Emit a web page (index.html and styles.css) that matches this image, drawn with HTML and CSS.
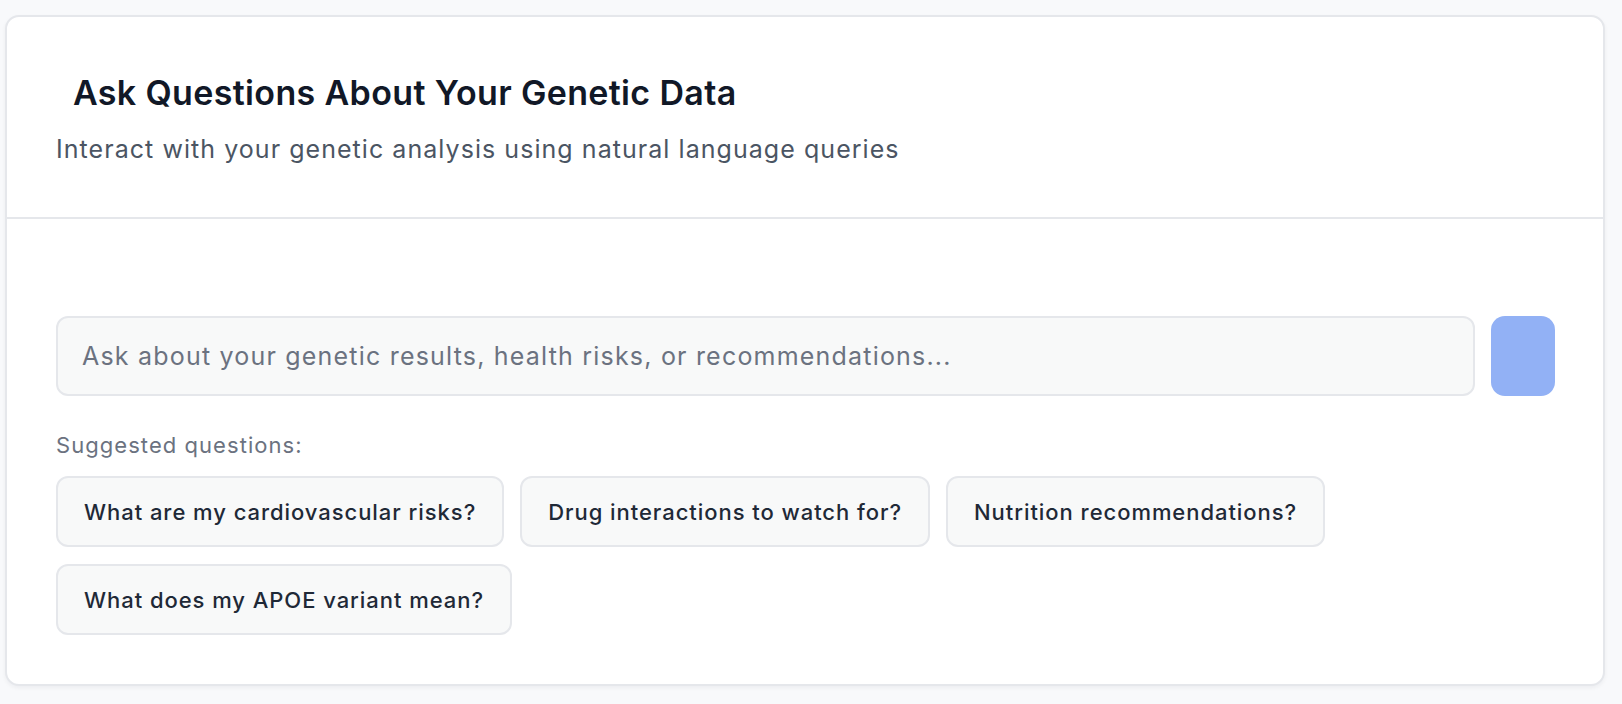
FILE: index.html
```html
<!DOCTYPE html>
<html lang="en">
<head>
<meta charset="utf-8">
<title>Ask Questions About Your Genetic Data</title>
<link rel="stylesheet" href="styles.css">
</head>
<body>
<div class="page">
  <section class="card">
    <header class="card-header">
      <h2 class="card-title"><span class="title-icon"></span>Ask Questions About Your Genetic Data</h2>
      <p class="card-desc">Interact with your genetic analysis using natural language queries</p>
    </header>
    <div class="card-body">
      <form class="ask-row">
        <input class="ask-input" type="text" placeholder="Ask about your genetic results, health risks, or recommendations...">
        <button class="ask-btn" type="button" disabled aria-label="Send"></button>
      </form>
      <p class="suggest-label">Suggested questions:</p>
      <div class="chips">
        <button class="chip" type="button">What are my cardiovascular risks?</button>
        <button class="chip" type="button">Drug interactions to watch for?</button>
        <button class="chip" type="button">Nutrition recommendations?</button>
        <button class="chip" type="button">What does my APOE variant mean?</button>
      </div>
    </div>
  </section>
</div>
</body>
</html>
```
FILE: styles.css
```css
* { box-sizing: border-box; }
html, body { margin: 0; padding: 0; }
body {
  background: #f8f9fb;
  font-family: Inter, "Noto Sans", "Liberation Sans", sans-serif;
  color: #111827;
}
.page {
  padding: 15px 17px 18px 5px;
}
.card {
  background: #ffffff;
  border: 2px solid #e5e7eb;
  border-radius: 14px;
  box-shadow: 0 2px 4px rgba(15, 23, 42, 0.05);
  height: 671px;
}
.card-header {
  padding: 56px 48px 0 49px;
  height: 202px;
  border-bottom: 2px solid #e5e7eb;
}
.card-title {
  margin: 0;
  display: flex;
  align-items: center;
  font-size: 34px;
  line-height: 40px;
  font-weight: 600;
  letter-spacing: 0.35px;
  color: #111827;
}
.title-icon {
  width: 0;
  margin-right: 17px;
}
.card-desc {
  margin: 20px 0 0;
  font-size: 25px;
  line-height: 32px;
  letter-spacing: 1.05px;
  color: #4b5563;
}
.card-body {
  padding: 97px 48px 48px 49px;
}
.ask-row {
  display: flex;
  gap: 16px;
  margin: 0;
}
.ask-input {
  flex: 1;
  height: 80px;
  padding: 0 24px;
  border: 2px solid #e5e7eb;
  border-radius: 12px;
  background: #f8f9f9;
  font-family: inherit;
  font-size: 25px;
  letter-spacing: 1.2px;
  color: #111827;
  outline: none;
}
.ask-input::placeholder { color: #6b7280; }
.ask-btn {
  width: 64px;
  height: 80px;
  border: none;
  border-radius: 14px;
  background: #92b1f5;
  padding: 0;
}
.suggest-label {
  margin: 35px 0 0;
  font-size: 22px;
  line-height: 28px;
  letter-spacing: 1.05px;
  color: #6b7280;
}
.chips {
  margin-top: 17px;
  display: flex;
  flex-wrap: wrap;
  gap: 17px 16px;
}
.chip {
  height: 71px;
  padding: 0 26px;
  border: 2px solid #e5e7eb;
  border-radius: 12px;
  background: #f8f9f9;
  font-family: inherit;
  font-size: 22px;
  font-weight: 500;
  letter-spacing: 0.95px;
  color: #1f2937;
  cursor: pointer;
}
```
